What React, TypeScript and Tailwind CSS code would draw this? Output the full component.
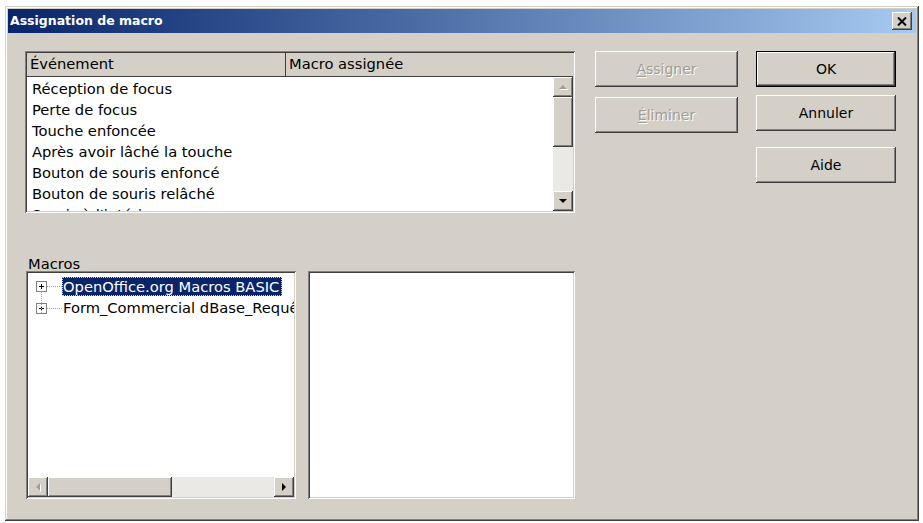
import React from "react";

const raised =
  "bg-[#d4d0c8] shadow-[inset_-1px_-1px_#404040,inset_1px_1px_#ffffff,inset_-2px_-2px_#808080,inset_2px_2px_#d4d0c8]";
const sunken =
  "shadow-[inset_1px_1px_#808080,inset_-1px_-1px_#ffffff,inset_2px_2px_#404040,inset_-2px_-2px_#d4d0c8]";

function Arrow({ dir, disabled }: { dir: "up" | "down" | "left" | "right"; disabled?: boolean }) {
  const pts = {
    up: "1,6 5,2 9,6",
    down: "1,2 5,6 9,2",
    left: "6,1 2,5 6,9",
    right: "2,1 6,5 2,9",
  }[dir];
  const vertical = dir === "up" || dir === "down";
  return (
    <svg width={vertical ? 10 : 8} height={vertical ? 8 : 10} viewBox={vertical ? "0 0 10 8" : "0 0 8 10"}>
      {disabled && <polygon points={pts} fill="#ffffff" transform="translate(1,1)" />}
      <polygon points={pts} fill={disabled ? "#a09d96" : "#000000"} />
    </svg>
  );
}

function ArrowButton({ dir, disabled }: { dir: "up" | "down" | "left" | "right"; disabled?: boolean }) {
  return (
    <div className={`w-[20px] h-[20px] shrink-0 flex items-center justify-center ${raised}`}>
      <Arrow dir={dir} disabled={disabled} />
    </div>
  );
}

function Button({
  label,
  accel,
  disabled,
  isDefault,
  className,
}: {
  label: string;
  accel?: number;
  disabled?: boolean;
  isDefault?: boolean;
  className?: string;
}) {
  const text =
    accel === undefined ? (
      label
    ) : (
      <>
        {label.slice(0, accel)}
        <span className="underline underline-offset-2">{label[accel]}</span>
        {label.slice(accel + 1)}
      </>
    );
  return (
    <div className={`h-[36px] ${isDefault ? "border border-black" : ""} ${className ?? ""}`}>
      <div
        className={`h-full flex items-center justify-center text-[14px] ${raised} ${
          disabled ? "text-[#a09d96] [text-shadow:1px_1px_0_#ffffff]" : "text-black"
        }`}
      >
        {text}
      </div>
    </div>
  );
}

const events = [
  "Réception de focus",
  "Perte de focus",
  "Touche enfoncée",
  "Après avoir lâché la touche",
  "Bouton de souris enfoncé",
  "Bouton de souris relâché",
  "Souris à l'intérieur",
];

function PlusBox() {
  return (
    <div className="w-[11px] h-[11px] border border-[#808080] bg-white flex items-center justify-center shrink-0">
      <svg width="9" height="9" viewBox="0 0 9 9">
        <path d="M2 4.5h5M4.5 2v5" stroke="#000" strokeWidth="1" />
      </svg>
    </div>
  );
}

export default function App() {
  return (
    <div className="w-[923px] h-[523px] bg-white pl-[5px] pt-[6px] font-['DejaVu_Sans',sans-serif] text-[14.7px] text-black overflow-hidden">
      <div className="w-[914px] h-[515px] bg-[#d4d0c8] p-[3px] flex flex-col shadow-[inset_-1px_-1px_#404040,inset_1px_1px_#d4d0c8,inset_-2px_-2px_#808080,inset_2px_2px_#ffffff]">
        {/* Title bar */}
        <div className="h-[24px] shrink-0 flex items-center justify-between pl-[2px] pr-[4px] bg-linear-to-r from-[#0a246a] to-[#a6caf0]">
          <span className="text-white font-bold text-[12.5px]">Assignation de macro</span>
          <div className={`w-[20px] h-[18px] flex items-center justify-center ${raised}`}>
            <svg width="10" height="9" viewBox="0 0 10 9">
              <path d="M1 0.5l8 8M9 0.5l-8 8" stroke="#000" strokeWidth="2" />
            </svg>
          </div>
        </div>

        <div className="flex pl-[17px] pt-[18px]">
          {/* Left column */}
          <div className="w-[550px] flex flex-col">
            {/* Event list */}
            <div className={`h-[162px] bg-white p-[2px] flex flex-col ${sunken}`}>
              <div className="h-[24px] shrink-0 flex bg-[#d4d0c8] border-b border-[#404040]">
                <div className="w-[259px] border-r border-[#404040] pl-[3px] flex items-center">Événement</div>
                <div className="flex-1 pl-[3px] flex items-center">Macro assignée</div>
              </div>
              <div className="flex flex-1 min-h-0">
                <div className="flex-1 overflow-hidden pl-[5px] pt-[1px]">
                  {events.map((e) => (
                    <div key={e} className="h-[21px] leading-[21px] whitespace-nowrap">
                      {e}
                    </div>
                  ))}
                </div>
                <div className="w-[20px] flex flex-col bg-[#ebe9e5]">
                  <ArrowButton dir="up" disabled />
                  <div className={`h-[50px] ${raised}`} />
                  <div className="flex-1" />
                  <ArrowButton dir="down" />
                </div>
              </div>
            </div>

            <div className="mt-[42px] ml-[3px] h-[18px] leading-[18px]">
              <span className="underline underline-offset-2">M</span>acros
            </div>

            {/* Macro panes */}
            <div className="flex mt-[-2px] ml-[1px] gap-[12px]">
              <div className={`w-[270px] h-[228px] bg-white p-[2px] flex flex-col ${sunken}`}>
                <div className="flex-1 overflow-hidden pl-[8px] pt-[2px] relative">
                  <div className="absolute left-[13px] top-[18px] h-[22px] border-l border-dotted border-[#a0a0a0]" />
                  <div className="h-[22px] flex items-center">
                    <PlusBox />
                    <div className="w-[15px] shrink-0 border-t border-dotted border-[#a0a0a0]" />
                    <div className="w-[220px] overflow-hidden shrink-0 bg-[#0a246a] text-white whitespace-nowrap pl-[1px] h-[19px] leading-[19px] outline outline-1 outline-dotted outline-[#d4d0c8] -outline-offset-1">
                      OpenOffice.org Macros BASIC
                    </div>
                  </div>
                  <div className="h-[22px] flex items-center">
                    <PlusBox />
                    <div className="w-[15px] shrink-0 border-t border-dotted border-[#a0a0a0]" />
                    <div className="whitespace-nowrap pl-[1px]">Form_Commercial dBase_Requêtes</div>
                  </div>
                </div>
                <div className="h-[20px] shrink-0 flex bg-[#ebe9e5]">
                  <ArrowButton dir="left" disabled />
                  <div className={`w-[124px] ${raised}`} />
                  <div className="flex-1" />
                  <ArrowButton dir="right" />
                </div>
              </div>
              <div className={`w-[270px] h-[228px] bg-white ${sunken}`} />
            </div>
          </div>

          {/* Buttons */}
          <div className="ml-[20px] w-[143px] flex flex-col">
            <Button label="Assigner" accel={0} disabled />
            <Button label="Éliminer" accel={0} disabled className="mt-[10px]" />
          </div>
          <div className="ml-[18px] w-[140px] flex flex-col">
            <Button label="OK" isDefault />
            <Button label="Annuler" className="mt-[8px]" />
            <Button label="Aide" className="mt-[16px]" />
          </div>
        </div>
      </div>
    </div>
  );
}
